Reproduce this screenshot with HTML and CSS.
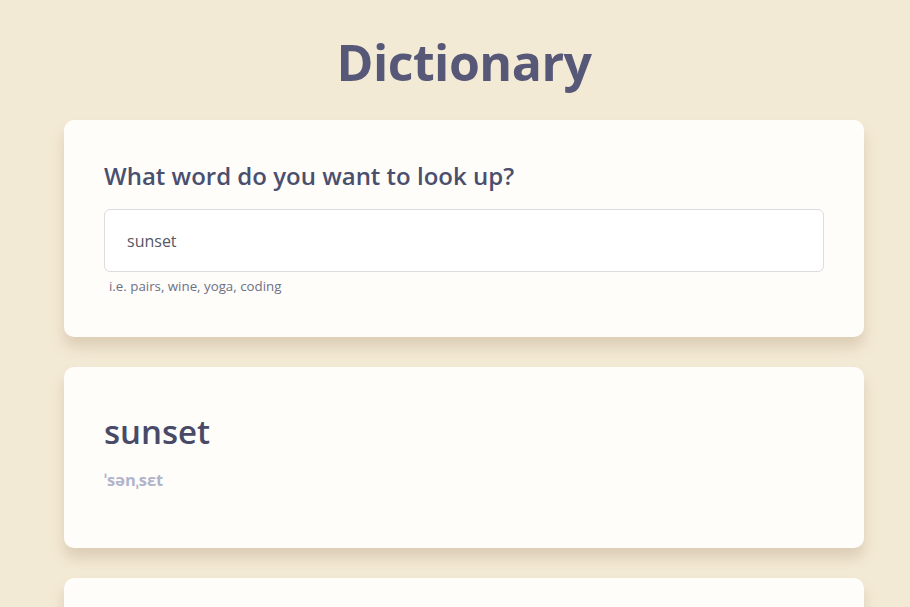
FILE: index.html
```html
<!DOCTYPE html>
<html lang="en">
<head>
<meta charset="utf-8">
<title>Dictionary</title>
<link rel="stylesheet" href="styles.css">
</head>
<body>
<div class="app">
  <h1 class="title">Dictionary</h1>
  <section class="card search">
    <h2 class="question">What word do you want to look up?</h2>
    <div class="input">sunset</div>
    <div class="hint">i.e. pairs, wine, yoga, coding</div>
  </section>
  <section class="card result">
    <h3 class="word">sunset</h3>
    <div class="phonetic">ˈsənˌsɛt</div>
  </section>
  <section class="card meaning"></section>
</div>
</body>
</html>
```
FILE: styles.css
```css
html, body {
  margin: 0;
  padding: 0;
  background: #f3ead5;
  font-family: "Open Sans", "Noto Sans", sans-serif;
  overflow: hidden;
  height: 607px;
}
.app {
  width: 800px;
  margin: 0 0 0 64px;
  display: flex;
  flex-direction: column;
  gap: 30px;
}
.title {
  margin: 28px 0 -6px;
  text-align: center;
  font-size: 50px;
  line-height: 68px;
  font-weight: 700;
  color: #575878;
  letter-spacing: -0.5px;
}
.card {
  background: #fefdfa;
  border-radius: 10px;
  box-shadow: 0 10px 14px rgba(160, 130, 100, 0.28);
  padding: 40px;
}
.search {
  padding-top: 38px;
  padding-bottom: 42px;
}
.question {
  margin: 0 0 15px;
  font-size: 24px;
  line-height: 36px;
  font-weight: 600;
  color: #4b4f6e;
}
.input {
  height: 61px;
  border: 1px solid #dcdcdc;
  border-radius: 6px;
  background: #fff;
  padding: 0 22px;
  display: flex;
  align-items: center;
  font-size: 16px;
  color: #555866;
}
.hint {
  margin: 5px 0 0 5px;
  font-size: 13.3px;
  line-height: 18px;
  color: #6e7086;
}
.result {
  height: 101px;
}
.word {
  margin: 0;
  font-size: 33px;
  line-height: 50px;
  font-weight: 600;
  color: #484a68;
}
.phonetic {
  margin-top: 12px;
  font-size: 16.5px;
  line-height: 22px;
  font-weight: 700;
  color: #b1b4cb;
}
.meaning {
  height: 200px;
}
```
